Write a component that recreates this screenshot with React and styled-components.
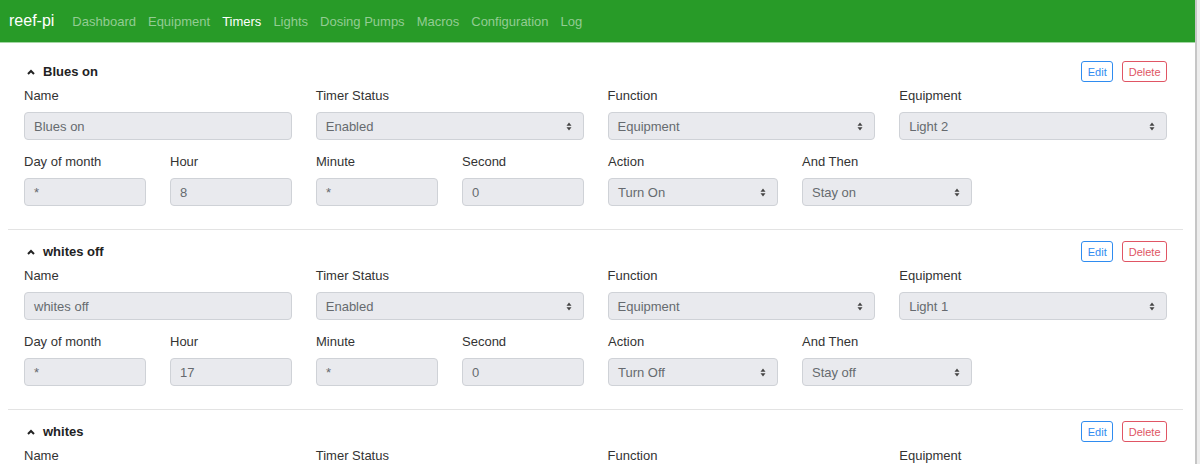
import React from 'react';
import styled, { createGlobalStyle } from 'styled-components';

const GlobalStyle = createGlobalStyle`
  html, body {
    margin: 0;
    padding: 0;
    background: #fff;
    font-family: "Liberation Sans", Arial, sans-serif;
    overflow: hidden;
  }
`;

const timers = [
  {
    name: 'Blues on',
    status: 'Enabled',
    func: 'Equipment',
    equipment: 'Light 2',
    day: '*',
    hour: '8',
    minute: '*',
    second: '0',
    action: 'Turn On',
    then: 'Stay on',
  },
  {
    name: 'whites off',
    status: 'Enabled',
    func: 'Equipment',
    equipment: 'Light 1',
    day: '*',
    hour: '17',
    minute: '*',
    second: '0',
    action: 'Turn Off',
    then: 'Stay off',
  },
  {
    name: 'whites',
    status: 'Enabled',
    func: 'Equipment',
    equipment: 'Light 1',
    day: '*',
    hour: '9',
    minute: '*',
    second: '0',
    action: 'Turn On',
    then: 'Stay on',
  },
];

const navItems = [
  'Dashboard',
  'Equipment',
  'Timers',
  'Lights',
  'Dosing Pumps',
  'Macros',
  'Configuration',
  'Log',
];

const ChevronUp = () => (
  <svg width="8" height="6" viewBox="0 0 8 6">
    <polyline
      points="1,5 4,2 7,5"
      fill="none"
      stroke="#222"
      strokeWidth="2"
    />
  </svg>
);

const SelectCaret = () => (
  <svg width="6" height="9" viewBox="0 0 6 9">
    <polygon points="3,0.5 5.5,3.8 0.5,3.8" fill="#444" />
    <polygon points="3,8.5 5.5,5.2 0.5,5.2" fill="#444" />
  </svg>
);

const Field = ({ label, value, select, width }) => (
  <FieldWrapper $width={width}>
    <Label>{label}</Label>
    <InputBox>
      <span>{value}</span>
      {select && <SelectCaret />}
    </InputBox>
  </FieldWrapper>
);

const Timer = ({ t }) => (
  <Section>
    <SectionHeader>
      <Title>
        <ChevronUp />
        <span>{t.name}</span>
      </Title>
      <Buttons>
        <SmallButton $color="#2f8cf0">Edit</SmallButton>
        <SmallButton $color="#e05564">Delete</SmallButton>
      </Buttons>
    </SectionHeader>
    <FieldRow>
      <Field label="Name" value={t.name} width={268} />
      <Field label="Timer Status" value={t.status} select width={268} />
      <Field label="Function" value={t.func} select width={268} />
      <Field label="Equipment" value={t.equipment} select width={268} />
    </FieldRow>
    <FieldRow>
      <Field label="Day of month" value={t.day} width={122} />
      <Field label="Hour" value={t.hour} width={122} />
      <Field label="Minute" value={t.minute} width={122} />
      <Field label="Second" value={t.second} width={122} />
      <Field label="Action" value={t.action} select width={170} />
      <Field label="And Then" value={t.then} select width={170} />
    </FieldRow>
  </Section>
);

export default function App() {
  return (
    <Page>
      <GlobalStyle />
      <Main>
        <Navbar>
          <Brand>reef-pi</Brand>
          <NavList>
            {navItems.map((n) => (
              <NavLink key={n} $active={n === 'Timers'}>
                {n}
              </NavLink>
            ))}
          </NavList>
        </Navbar>
        <Container>
          {timers.map((t) => (
            <Timer key={t.name} t={t} />
          ))}
        </Container>
      </Main>
      <ScrollStrip />
    </Page>
  );
}

const Page = styled.div`
  display: flex;
  width: 1200px;
  height: 464px;
  overflow: hidden;
`;

const Main = styled.div`
  width: 1195px;
  flex: 0 0 1195px;
`;

const ScrollStrip = styled.div`
  flex: 1;
  border-left: 2px solid #c6c6c6;
  background: #ededed;
`;

const Navbar = styled.div`
  display: flex;
  align-items: center;
  height: 42px;
  background: #289b28;
  border-bottom: 1px solid #a3d6a3;
  padding-left: 9px;
`;

const Brand = styled.div`
  color: #fff;
  font-size: 16px;
  margin-right: 12px;
`;

const NavList = styled.div`
  display: flex;
  align-items: center;
`;

const NavLink = styled.div`
  font-size: 13px;
  padding: 0 6px;
  color: ${(p) => (p.$active ? '#ffffff' : '#93cc93')};
`;

const Container = styled.div`
  margin: 7px 12px 0 8px;
`;

const Section = styled.div`
  padding: 11px 16px 23px;
  border-bottom: 1px solid #e3e3e3;
`;

const SectionHeader = styled.div`
  display: flex;
  justify-content: space-between;
  align-items: center;
  height: 21px;
`;

const Title = styled.div`
  display: flex;
  align-items: center;
  gap: 8px;
  padding-left: 3px;
  font-size: 13px;
  font-weight: 700;
  color: #222;
`;

const Buttons = styled.div`
  display: flex;
  gap: 9px;
`;

const SmallButton = styled.div`
  height: 21px;
  box-sizing: border-box;
  display: flex;
  align-items: center;
  padding: 0 5.5px;
  font-size: 11px;
  color: ${(p) => p.$color};
  border: 1px solid ${(p) => p.$color};
  border-radius: 3px;
  background: #fff;
`;

const FieldRow = styled.div`
  display: flex;
  gap: 24px;
  margin-top: 6px;

  & + & {
    margin-top: 14px;
  }
`;

const FieldWrapper = styled.div`
  width: ${(p) => p.$width}px;
  display: flex;
  flex-direction: column;
`;

const Label = styled.div`
  font-size: 13px;
  line-height: 16px;
  color: #333;
  margin-bottom: 8px;
`;

const InputBox = styled.div`
  height: 28px;
  box-sizing: border-box;
  display: flex;
  align-items: center;
  justify-content: space-between;
  padding: 0 11px 0 9px;
  background: #e9eaee;
  border: 1px solid #cfd2d7;
  border-radius: 4px;
  font-size: 13px;
  color: #666a6f;
`;
